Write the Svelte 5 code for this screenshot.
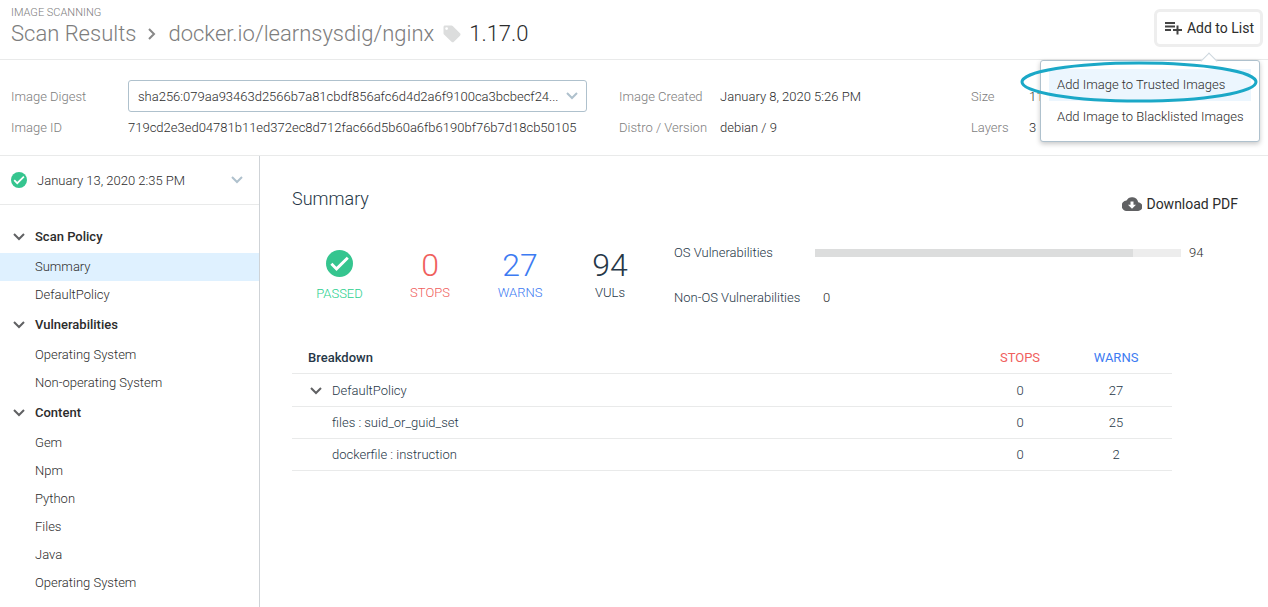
<script>
  const sections = [
    { title: 'Scan Policy', items: ['Summary', 'DefaultPolicy'] },
    { title: 'Vulnerabilities', items: ['Operating System', 'Non-operating System'] },
    { title: 'Content', items: ['Gem', 'Npm', 'Python', 'Files', 'Java', 'Operating System'] }
  ];
  const rows = [
    { name: 'DefaultPolicy', stops: 0, warns: 27, group: true },
    { name: 'files : suid_or_guid_set', stops: 0, warns: 25 },
    { name: 'dockerfile : instruction', stops: 0, warns: 2 }
  ];
  const stats = [
    { value: 0, label: 'STOPS', kind: 'stops' },
    { value: 27, label: 'WARNS', kind: 'warns' },
    { value: 94, label: 'VULs', kind: 'vuls' }
  ];
  const fill = 87;
  let selected = $state('Scan Policy/Summary');
</script>

{#snippet chevron()}
  <svg class="chevron" viewBox="0 0 12 8" aria-hidden="true"><path d="M1 1l5 5 5-5" /></svg>
{/snippet}

{#snippet check()}
  <svg class="check" viewBox="0 0 28 28" aria-hidden="true">
    <circle cx="14" cy="14" r="14" />
    <path d="M5.6 14.3l5.3 5.3L22.6 8" />
  </svg>
{/snippet}

<div class="page">
  <header class="top">
    <div>
      <div class="eyebrow">IMAGE SCANNING</div>
      <h1>
        <a href="#results">Scan Results</a>
        <svg class="crumb" viewBox="0 0 8 12" aria-hidden="true"><path d="M1 1l5 5-5 5" /></svg>
        <a href="#repo">docker.io/learnsysdig/nginx</a>
        <svg class="tag" viewBox="0 0 18 18" aria-hidden="true">
          <path fill-rule="evenodd" d="M2 .5h6.5c.5 0 .9.2 1.2.5l7.3 7.3c.7.7.7 1.700 0 2.400l-6.100 6.100c-.7.7-1.700.7-2.400 0L1 9.500C.7 9.200.5 8.700.5 8.200V2C.5 1.200 1.200.5 2 .5zM3.600 2.200a1.400 1.400 0 1 0 0 2.800 1.400 1.400 0 0 0 0-2.800z" />
        </svg>
        <span>1.17.0</span>
      </h1>
    </div>
    <div class="add">
      <button class="add-button" aria-haspopup="menu">
        <svg viewBox="0 0 18 14" aria-hidden="true"><path d="M1 2h10M1 5.500h10M1 9h6M13.500 4.500v9M9 9h9" /></svg>
        Add to List
      </button>
      <div class="menu">
        <button class="active">Add Image to Trusted Images</button>
        <button>Add Image to Blacklisted Images</button>
        <svg class="ring" viewBox="0 0 238 42" aria-hidden="true"><ellipse cx="119" cy="21" rx="117" ry="19" /></svg>
      </div>
    </div>
  </header>

  <section class="meta">
    <div class="facts digest">
      <label for="digest">Image Digest</label>
      <div class="picker boxed">
        <select id="digest"><option>sha256:079aa93463d2566b7a81cbdf856afc6d4d2a6f9100ca3bcbecf24...</option></select>
        {@render chevron()}
      </div>
      <span class="name">Image ID</span>
      <span>719cd2e3ed04781b11ed372ec8d712fac66d5b60a6fb6190bf76b7d18cb50105</span>
    </div>
    <div class="facts created">
      <span class="name">Image Created</span><span>January 8, 2020 5:26 PM</span>
      <span class="name">Distro / Version</span><span>debian / 9</span>
    </div>
    <div class="facts size">
      <span class="name">Size</span><span>11</span>
      <span class="name">Layers</span><span>3</span>
    </div>
  </section>

  <div class="body">
    <aside>
      <div class="picker scan">
        {@render check()}
        <select aria-label="Scan date"><option>January 13, 2020 2:35 PM</option></select>
        {@render chevron()}
      </div>
      <nav>
        {#each sections as section}
          <button class="heading" aria-expanded="true">{@render chevron()}{section.title}</button>
          {#each section.items as item}
            {@const key = `${section.title}/${item}`}
            <a class="item" class:current={selected === key} href="#item" onclick={() => (selected = key)}>{item}</a>
          {/each}
        {/each}
      </nav>
    </aside>

    <main>
      <div class="title">
        <h2>Summary</h2>
        <button class="download">
          <svg viewBox="0 0 20 14" aria-hidden="true">
            <path fill-rule="evenodd" d="M16.200 5.200A6.300 6.300 0 0 0 4.500 3.600 5.200 5.200 0 0 0 5.200 14h10.600a4.400 4.400 0 0 0 .4-8.800zM8.500 4.500h3v3.200H14l-4 4-4-4h2.500z" />
          </svg>
          Download PDF
        </button>
      </div>

      <div class="overview">
        <div class="stats">
          <div class="stat passed">{@render check()}<span>PASSED</span></div>
          {#each stats as stat}
            <div class="stat {stat.kind}"><strong>{stat.value}</strong><span>{stat.label}</span></div>
          {/each}
        </div>
        <div class="bars">
          <div class="bar-row">
            <span class="bar-name">OS Vulnerabilities</span>
            <div class="track"><div class="fill" style:width="{fill}%"></div></div>
            <span class="count">94</span>
          </div>
          <div class="bar-row">
            <span class="bar-name">Non-OS Vulnerabilities</span>
            <span class="count">0</span>
          </div>
        </div>
      </div>

      <table>
        <thead>
          <tr><th>Breakdown</th><th class="num stops">STOPS</th><th class="num warns">WARNS</th></tr>
        </thead>
        <tbody>
          {#each rows as row}
            <tr>
              <td class:group={row.group}>{#if row.group}{@render chevron()}{/if}{row.name}</td>
              <td class="num">{row.stops}</td>
              <td class="num">{row.warns}</td>
            </tr>
          {/each}
        </tbody>
      </table>
    </main>
  </div>
</div>

<style>
  :global(body) { margin: 0; background: #fff; }
  .page {
    min-height: 100vh;
    display: flex;
    flex-direction: column;
    font: 300 13px/20px Roboto, sans-serif;
    color: #2c2c2c;
  }
  * { box-sizing: border-box; }
  button, select { font: inherit; color: inherit; background: none; border: 0; padding: 0; margin: 0; }
  button { cursor: pointer; text-align: left; }
  a { color: inherit; text-decoration: none; }
  svg { flex: none; display: block; }
  h1, h2 { margin: 0; font-weight: 300; }

  .chevron { width: 12px; height: 8px; fill: none; stroke: #606163; stroke-width: 2; }
  .check circle { fill: #35c58f; }
  .check path { fill: none; stroke: #fff; stroke-width: 3; }

  .top {
    display: flex;
    justify-content: space-between;
    align-items: flex-start;
    height: 60px;
    padding: 6px 5px 0 11px;
    border-bottom: 1px solid #e9eaea;
  }
  .eyebrow { font-size: 11px; line-height: 14px; color: #7d7d7d; }
  h1 { display: flex; align-items: center; font-size: 22px; line-height: 28px; color: #7d7d7d; }
  h1 span { color: #2c2c2c; }
  .crumb { width: 8px; height: 12px; margin: 0 12px; fill: none; stroke: #888; stroke-width: 2; }
  .tag { width: 18px; height: 18px; margin: 0 8px 0 9px; fill: #dcdddd; }

  .add { position: relative; padding-top: 3px; }
  .add-button {
    display: flex;
    align-items: center;
    gap: 5px;
    height: 38px;
    padding: 0 6px 0 7px;
    border: 3px solid #eee;
    border-radius: 6px;
    font-size: 14px;
    font-weight: 400;
  }
  .add-button svg { width: 18px; height: 14px; fill: none; stroke: #444; stroke-width: 2; }
  .menu {
    position: absolute;
    z-index: 2;
    top: 54px;
    right: 3px;
    width: 220px;
    padding: 8px;
    background: #fff;
    border: 1px solid #afc1cd;
    border-radius: 3px;
    box-shadow: 0 2px 5px rgba(0, 0, 0, .22);
  }
  .menu::before {
    content: '';
    position: absolute;
    top: -6px;
    right: 44px;
    width: 11px;
    height: 11px;
    background: #fff;
    border: solid #ccd6dd;
    border-width: 1px 0 0 1px;
    transform: rotate(45deg);
  }
  .menu button { position: relative; display: block; width: 100%; height: 32px; padding: 0 8px; white-space: nowrap; }
  .menu .active { background: #ecf6fe; }
  .ring {
    position: absolute;
    top: 0;
    left: -21px;
    width: 238px;
    height: 42px;
    fill: none;
    stroke: #1ba8c7;
    stroke-width: 3;
    pointer-events: none;
  }

  .meta { display: flex; padding: 20px 11px 14px; border-bottom: 1px solid #e9eaea; }
  .facts { display: grid; grid-template-rows: 32px 29px; align-items: center; white-space: nowrap; }
  .facts label, .facts span { padding-top: 2px; }
  .facts label, .name { color: #7d7d7d; }
  .digest { grid-template-columns: 117px 459px; margin-right: 32px; }
  .created { grid-template-columns: 101px 251px; }
  .size { grid-template-columns: 58px auto; }
  .picker { position: relative; display: flex; align-items: center; }
  .picker select { appearance: none; flex: 1; min-width: 0; padding-top: 2px; outline: none; }
  .picker .chevron { stroke: #afc1cd; pointer-events: none; }
  .boxed { height: 32px; padding: 0 8px 0 9px; border: 1px solid #afc1cd; border-radius: 3px; }

  .body { flex: 1; display: flex; }
  aside { flex: none; width: 260px; border-right: 1px solid #cfd3d7; padding-bottom: 8px; }
  .scan { height: 49px; padding: 0 16px 0 11px; border-bottom: 1px solid #e9eaea; }
  .scan .check { width: 16px; height: 16px; margin-right: 10px; }
  nav { padding-top: 16px; }
  .heading { display: flex; align-items: center; gap: 10px; width: 100%; height: 32px; padding: 0 13px; font-weight: 500; }
  .item { display: block; padding: 4px 35px; }
  .current { background: #dff1ff; }

  main { flex: 1; min-width: 0; padding: 32px 30px 32px 32px; color: #263747; }
  .title { display: flex; justify-content: space-between; }
  h2 { font-size: 18px; line-height: 22px; }
  .download { display: flex; align-items: center; gap: 4px; height: 32px; font-size: 14px; font-weight: 400; color: #2c2c2c; }
  .download svg { width: 20px; height: 14px; fill: #606163; }

  .overview { display: flex; padding: 23px 34px 0 2px; }
  .stats { display: flex; padding-top: 2px; }
  .stat { display: flex; flex-direction: column; align-items: center; width: 90px; }
  .stat strong { font-size: 32px; line-height: 40px; font-weight: 300; }
  .stat span { line-height: 16px; }
  .passed { width: 91px; color: #2bd08f; gap: 9px; padding-top: 5px; }
  .passed .check { width: 27px; height: 27px; }
  .stops { color: #f0605d; }
  .warns { color: #3d7bf2; }
  .bars { flex: 1; margin-left: 19px; display: grid; gap: 25px; align-content: start; }
  .bar-row { display: flex; align-items: center; height: 20px; }
  .bar-name { min-width: 141px; white-space: nowrap; }
  .bar-row .count { width: 23px; padding-left: 8px; color: #2c2c2c; }
  .track { flex: 1; height: 8px; background: #ededed; }
  .fill { height: 8px; background: #dcdddd; }

  table { width: 100%; max-width: 880px; margin-top: 33px; border-collapse: collapse; }
  th, td { height: 32px; padding: 2px 0 0 40px; border-bottom: 1px solid #e9eaea; text-align: left; font-weight: 300; }
  th { padding-left: 16px; font-weight: 500; }
  .num { width: 96px; padding: 2px 0 0; text-align: center; }
  th.num { font-weight: 400; }
  .num:last-child { width: 104px; padding-right: 8px; }
  td.group { height: 33px; padding-left: 18px; }
  .group .chevron { display: inline-block; margin-right: 10px; }
</style>
